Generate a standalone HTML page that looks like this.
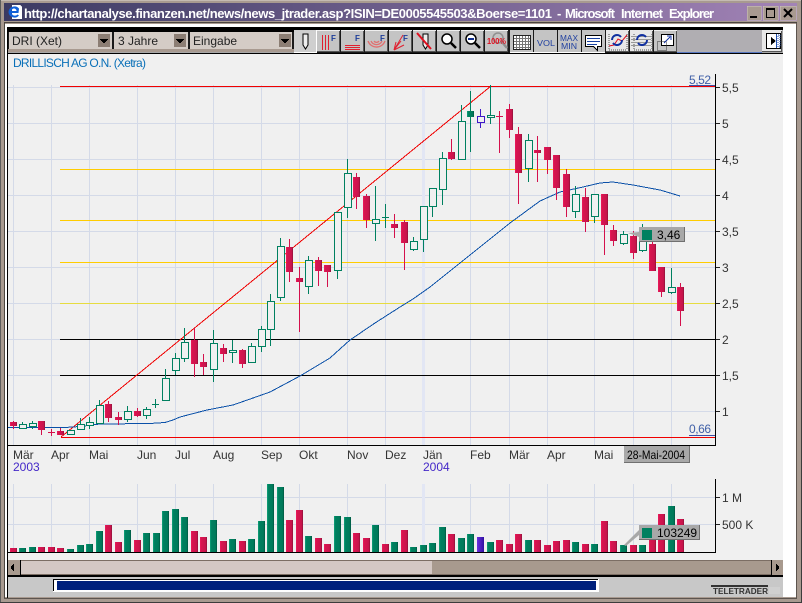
<!DOCTYPE html>
<html><head><meta charset="utf-8"><title>Chart</title>
<style>
html,body{margin:0;padding:0;background:#a89a90;width:802px;height:603px;overflow:hidden}
svg{display:block;font-family:"Liberation Sans",sans-serif}
.c{shape-rendering:crispEdges}
.t{font-size:12px;fill:#333}
</style></head><body>
<svg width="802" height="603" viewBox="0 0 802 603" xmlns="http://www.w3.org/2000/svg">
<defs>
<linearGradient id="tb"><stop offset="0" stop-color="#3b3a62"/><stop offset="1" stop-color="#a283b6"/></linearGradient>
<linearGradient id="r"><stop offset="0" stop-color="#ee1a60"/><stop offset=".18" stop-color="#d8154f"/><stop offset=".8" stop-color="#c8144c"/><stop offset="1" stop-color="#8c1038"/></linearGradient>
<linearGradient id="g"><stop offset="0" stop-color="#12a67c"/><stop offset=".2" stop-color="#008060"/><stop offset=".8" stop-color="#007a5a"/><stop offset="1" stop-color="#00553f"/></linearGradient>
<linearGradient id="v"><stop offset="0" stop-color="#6a30e0"/><stop offset="1" stop-color="#3010a0"/></linearGradient>
</defs>
<!-- frame -->
<g class="c">
<rect width="802" height="603" fill="#a89a90"/>
<rect width="802" height="1" fill="#c4bab2"/>
<rect width="1" height="603" fill="#5c5c5c"/>
<rect x="801" width="1" height="603" fill="#3c3c3c"/>
<rect y="602" width="802" height="1" fill="#3c3c3c"/>
<rect x="4" y="3" width="793" height="18" fill="url(#tb)"/>
<rect x="4" y="22" width="793" height="1" fill="#4c4640"/>
<rect x="4" y="23" width="1" height="576" fill="#4c4640"/>
<rect x="5" y="24" width="791" height="573" fill="#fff"/>
<rect x="796" y="23" width="1" height="576" fill="#5c544e"/>
<rect x="4" y="598" width="793" height="1" fill="#5c544e"/>
<rect x="7" y="27" width="776" height="3" fill="#000"/>
<rect x="7" y="27" width="1" height="571" fill="#000"/>
</g>
<!-- title -->
<path class="c" d="M12 5h8l2 2v12h-10z" fill="#fff"/>
<path d="M8.500 12a6 6 0 0 1 10.500-3.500l-.5 4.500h-7a3.500 3.500 0 0 0 6 1.500l1.500 1a6 6 0 0 1-10.500-3.500zM11.500 11h5a2.500 2.500 0 0 0-5 0z" fill="#1060d8" fill-rule="evenodd"/>
<g font-size="13" font-weight="bold" fill="#fff">
<text x="24" y="18" textLength="528" lengthAdjust="spacing">http://chartanalyse.finanzen.net/news/news_jtrader.asp?ISIN=DE0005545503&amp;Boerse=1101</text>
<text x="557" y="18">-</text>
<text x="565" y="18" textLength="50" lengthAdjust="spacing">Microsoft</text>
<text x="621" y="18" textLength="42" lengthAdjust="spacing">Internet</text>
<text x="669" y="18" textLength="45" lengthAdjust="spacing">Explorer</text>
</g>
<g class="c">
<path d="M747 6h14v14h-14zM763 6h15v14h-15zM780 6h16v14h-16z" fill="#a89a90" stroke="#d0c8c0" stroke-width=".5"/>
<path d="M750 16h7v2h-7zM766 8h9v2h-9z" fill="#000"/>
<path d="M766.500 9.500h8v8h-8z" fill="none" stroke="#000"/>
</g>
<path d="M784 9l8 8M792 9l-8 8" stroke="#000" stroke-width="2"/>
<!-- toolbar -->
<g class="c">
<rect x="8" y="29" width="775" height="24" fill="#a8a8a8"/>
<rect x="8" y="29" width="775" height="1" fill="#000"/>
<rect x="8" y="30" width="286" height="2" fill="#000"/>
<rect x="8" y="49" width="286" height="3" fill="#a89a90"/>
<rect x="316" y="30" width="361" height="23" fill="#1a1a1a"/>
<rect x="8" y="53" width="775" height="1" fill="#000"/>
<rect x="8" y="32" width="286" height="17" fill="#1a1a1a"/>
<rect x="9" y="32" width="103" height="17" fill="#d4ccc6"/>
<rect x="114" y="32" width="74" height="17" fill="#d4ccc6"/>
<rect x="190" y="32" width="102" height="17" fill="#d4ccc6"/>
<path d="M98 34h12v13h-12zM174 34h12v13h-12zM279 34h12v13h-12z" fill="#8c7e74"/>
<path d="M100 39h8v1h-1v1h-1v1h-1v1h-2v-1h-1v-1h-1v-1h-1zM176 39h8v1h-1v1h-1v1h-1v1h-2v-1h-1v-1h-1v-1h-1zM281 39h8v1h-1v1h-1v1h-1v1h-2v-1h-1v-1h-1v-1h-1z" fill="#000"/>
<rect x="294" y="30" width="23" height="22" fill="#cfcfcf"/>
<path d="M294 52h23v1h-23zM316 30h1v22h-1z" fill="#fff"/>
<rect x="677" y="30" width="85" height="22" fill="#b0aeb2"/>
<rect x="677" y="52" width="85" height="1" fill="#5878c0"/>
<path d="M317 30h23v22h-23zM341 30h23v22h-23zM365 30h23v22h-23zM389 30h23v22h-23zM413 30h23v22h-23zM437 30h23v22h-23zM461 30h23v22h-23zM485 30h23v22h-23zM510 30h23v22h-23zM534 30h23v22h-23zM558 30h23v22h-23zM582 30h23v22h-23zM654 30h23v22h-23z" fill="#c4c4c4"/>
<path d="M606 30h23v22h-23zM630 30h23v22h-23zM762 30h20v22h-20z" fill="#e8e8e8"/>
<path d="M317 30h23v1h-23zM341 30h23v1h-23zM365 30h23v1h-23zM389 30h23v1h-23zM413 30h23v1h-23zM437 30h23v1h-23zM461 30h23v1h-23zM485 30h23v1h-23zM654 30h23v1h-23z" fill="#efefef"/>
<path d="M339 31h1v21h-1zM363 31h1v21h-1zM387 31h1v21h-1zM411 31h1v21h-1zM435 31h1v21h-1zM459 31h1v21h-1zM483 31h1v21h-1zM507 31h1v21h-1zM628 31h1v21h-1zM652 31h1v21h-1zM676 31h1v21h-1zM781 31h1v21h-1zM317 51h23v1h-23zM341 51h23v1h-23zM365 51h23v1h-23zM389 51h23v1h-23zM413 51h23v1h-23zM437 51h23v1h-23zM461 51h23v1h-23zM485 51h23v1h-23zM606 51h23v1h-23zM630 51h23v1h-23zM654 51h23v1h-23zM762 51h20v1h-20z" fill="#555"/>
<path d="M510 52h95v1h-95z" fill="#fff"/>
</g>
<text x="12" y="45" font-size="12" fill="#222">DRI (Xet)</text>
<text x="118" y="45" font-size="12" fill="#222">3 Jahre</text>
<text x="193" y="45" font-size="12" fill="#222">Eingabe</text>
<!-- icons -->
<g fill="none">
<path d="M303 34h5v11l-2.500 4-2.500-4z" fill="#eee" stroke="#000"/>
<path d="M322.500 35v15M325.500 35v15M328.500 35v15M345 45.500h15M345 47.500h15M345 49.500h15" stroke="#e02030" class="c"/>
<path d="M368 41a9 9 0 0 0 17 0M371 41a6 6 0 0 0 11 0M374 41a3 3 0 0 0 5 0" stroke="#e07070" stroke-width="1.300"/>
<path d="M394 50l9-15M394 50l7-9M394 50l10-5M394 50l2-8" stroke="#e02030"/>
<path d="M423 34h5v11l-2.500 4-2.500-4z" fill="#eee" stroke="#000"/>
<path d="M417 33l14 16" stroke="#e01020" stroke-width="2"/>
<circle cx="447" cy="39" r="5" fill="#fff" stroke="#000" stroke-width="1.500"/>
<path d="M451 43l5 5" stroke="#000" stroke-width="2.500"/>
<circle cx="471" cy="39" r="5" fill="#fff" stroke="#000" stroke-width="1.500"/>
<path d="M475 43l5 5" stroke="#000" stroke-width="2.500"/>
<path d="M468 39h6" stroke="#103090" stroke-width="2"/>
<circle cx="498" cy="38" r="5" fill="#c4c4c4" stroke="#909090" stroke-width="1.500"/>
<path d="M502 42l5 6" stroke="#909090" stroke-width="2.500"/>
<g class="c">
<path d="M513.500 35.500h17v14h-17z" fill="#fff" stroke="#222"/>
<path d="M516.500 36v13M519.500 36v13M522.500 36v13M525.500 36v13M528.500 36v13M514 38.500h16M514 41.500h16M514 44.500h16M514 47.500h16" stroke="#777"/>
<path d="M585.500 35.500h16v11h-4v4l-4-4h-8z" fill="#fff" stroke="#000"/>
<path d="M587 38.500h13M587 41.500h13M587 44.500h10" stroke="#1840a0"/>
<path d="M609 34v16h18M634 34v16h18M627 34v16M652 34v16" stroke="#555" stroke-dasharray="1 1"/>
<path d="M631 36.500h20M631 39.500h20M631 42.500h20M631 45.500h20" stroke="#999"/>
<path d="M661.500 34.500h12v11h-12z" fill="#fff" stroke="#000"/>
<path d="M657.500 41.500h9v9h-9z" stroke="#333" stroke-dasharray="1 1"/>
<path d="M766.500 33.500h14v15h-14z" fill="#fff" stroke="#000"/>
<path d="M776.500 34v14" stroke="#2050b0"/>
<path d="M771 37l5 4-5 4z" fill="#000"/>
<path d="M778 35h2v12h-2z" stroke="#2050b0" stroke-dasharray="1 1"/>
</g>
<path d="M609 46l5-1 4-6 4 2 5-6" stroke="#e01020"/>
<path d="M612 40a5 5 0 0 1 9-3M622 40a5 5 0 0 1-9 3" stroke="#1030a0" stroke-width="2"/>
<path d="M637 40a5 5 0 0 1 9-3M647 40a5 5 0 0 1-9 3" stroke="#1030a0" stroke-width="2"/>
<path d="M664 43l6-6M667 36h4v4" stroke="#1030a0"/>
</g>
<g font-weight="bold" font-size="8" fill="#1c3c98">
<text x="331" y="41">F</text><text x="355" y="41">F</text><text x="380" y="41">F</text><text x="403" y="41">F</text>
</g>
<text x="487" y="44" font-size="8.500" font-weight="bold" fill="#e01020" textLength="19" lengthAdjust="spacingAndGlyphs">100%</text>
<g font-size="8.500" fill="#2040a0">
<text x="537" y="46" textLength="18" lengthAdjust="spacingAndGlyphs">VOL</text>
<text x="560" y="41" textLength="18" lengthAdjust="spacingAndGlyphs">MAX</text>
<text x="561" y="49" textLength="16" lengthAdjust="spacingAndGlyphs">MIN</text>
</g>
<!-- chart background -->
<rect class="c" x="8" y="54" width="775" height="506" fill="#f0f0f0"/>
<text x="13" y="67" font-size="12" fill="#0a70b8" textLength="133" lengthAdjust="spacing">DRILLISCH AG O.N. (Xetra)</text>
<!-- grid -->
<g class="c" stroke="#d4dae8" fill="none">
<path d="M8 87.500h707M8 123.500h707M8 159.500h707M8 195.500h707M8 231.500h707M8 267.500h707M8 303.500h707M8 339.500h707M8 375.500h707M8 411.500h707"/>
<path d="M13.500 85v360M51.500 85v360M89.500 85v360M137.500 85v360M175.500 85v360M213.500 85v360M261.500 85v360M299.500 85v360M347.500 85v360M385.500 85v360M470.500 85v360M509.500 85v360M547.500 85v360M594.500 85v360M633.500 85v360M671.500 85v360"/>
<path d="M423.500 85v360" stroke="#e2e6f4" stroke-width="3"/>
<path d="M8 497.500h707M8 524.500h707"/>
<path d="M13.500 484v68M51.500 484v68M89.500 484v68M137.500 484v68M175.500 484v68M213.500 484v68M261.500 484v68M299.500 484v68M347.500 484v68M385.500 484v68M470.500 484v68M509.500 484v68M547.500 484v68M594.500 484v68M633.500 484v68M671.500 484v68"/>
<path d="M423.500 484v68" stroke="#e2e6f4" stroke-width="3"/>
</g>
<!-- level lines -->
<g class="c" fill="none">
<path d="M60 86.500h655M61 437.500h654" stroke="#f00000"/>
<path d="M60 169.500h655M60 220.500h655M60 262.500h655" stroke="#ffcc00"/>
<path d="M60 303.500h655" stroke="#e6dc40"/>
<path d="M60 339.500h655M60 375.500h655" stroke="#000"/>
</g>
<path class="c" d="M61 437L491 86" stroke="#f00000" fill="none"/>
<path class="c" d="M8 427.500L65 427.500 80 426.500 100 424 150 423.500 165 422.500 173 420 180 417 207 410 233 405 253 398 270 392 300 376 330 358 350 340 375 323 400 307 413 299 430 287 450 271 470 255 490 239 510 223 540 201 560 192 583 187 600 183 613 182 633 185 660 190 680 196" stroke="#0a50a8" fill="none"/>
<!-- wicks -->
<g class="c" fill="none">
<path stroke="#008060" d="M22.500 422v7M32.500 421v8M70.500 430v5M80.500 418v12M89.500 417v12M99.500 400v24M127.500 406v16M146.500 407v12M155.500 399v9M152 404.500h7M165.500 369v32M175.500 353v22M184.500 328v34M213.500 330v52M232.500 340v23M251.500 343v20M261.500 326v26M270.500 294v52M280.500 238v63M308.500 256v38M337.500 212v67M347.500 159v59M375.500 186v55M385.500 204v24M382 217.500h7M413.500 237v14M423.500 206v46M432.500 188v29M442.500 152v53M461.500 105v55M470.500 91v61M490.500 85v39M528.500 134v48M575.500 186v32M594.500 194v29M623.500 231v14M642.500 224v28M671.500 268v26"/>
<path stroke="#d4104c" d="M13.500 421v8M41.500 421v14M51.500 429v7M48 432.500h7M60.500 428v7M108.500 401v21M118.500 412v13M137.500 408v9M194.500 328v49M203.500 354v21M223.500 344v18M242.500 349v19M289.500 239v43M299.500 267v65M318.500 257v29M327.500 265v22M356.500 173v36M366.500 194v34M394.500 214v24M404.500 220v50M451.500 139v21M499.500 111v42M496 116.500h7M509.500 104v34M518.500 127v77M537.500 136v46M547.500 147v27M556.500 155v45M566.500 169v48M585.500 188v44M604.500 194v61M613.500 225v21M633.500 231v28M652.500 240v31M661.500 267v30M680.500 283v43"/>
<path stroke="#4018c8" d="M480.500 109v19"/>
</g>
<!-- hollow bodies -->
<g class="c" fill="#f0f0f0" stroke="#008060">
<path d="M19.500 424.500h7v4h-7zM29.500 423.500h7v3h-7zM67.500 430.500h7v4h-7zM77.500 424.500h7v5h-7zM86.500 422.500h7v3h-7zM96.500 405.500h7v18h-7zM124.500 411.500h7v8h-7zM143.500 409.500h7v6h-7zM162.500 378.500h7v22h-7zM172.500 358.500h7v12h-7zM181.500 342.500h7v16h-7zM210.500 343.500h7v26h-7zM229.500 350.500h7v2h-7zM248.500 346.500h7v16h-7zM258.500 329.500h7v17h-7zM267.500 301.500h7v28h-7zM277.500 246.500h7v51h-7zM305.500 260.500h7v26h-7zM334.500 212.500h7v58h-7zM344.500 173.500h7v34h-7zM372.500 219.500h7v4h-7zM410.500 241.500h7v8h-7zM420.500 206.500h7v33h-7zM429.500 188.500h7v18h-7zM439.500 158.500h7v31h-7zM458.500 121.500h7v38h-7zM487.500 115.500h7v2h-7zM525.500 140.500h7v28h-7zM572.500 194.500h7v17h-7zM591.500 194.500h7v22h-7zM620.500 234.500h7v9h-7zM639.500 237.500h7v13h-7zM668.500 287.500h7v5h-7z"/>
<path d="M477.500 116.500h7v6h-7z" stroke="#4018c8"/>
<path d="M467 111h7v6h-7z" fill="url(#g)" stroke="none"/>
</g>
<!-- red bodies -->
<g class="c" fill="url(#r)">
<rect x="10" y="422" width="7" height="4"/><rect x="38" y="421" width="7" height="9"/><rect x="57" y="431" width="7" height="4"/><rect x="105" y="404" width="7" height="14"/><rect x="115" y="417" width="7" height="3"/><rect x="134" y="411" width="7" height="5"/><rect x="191" y="340" width="7" height="24"/><rect x="200" y="362" width="7" height="5"/><rect x="220" y="348" width="7" height="6"/><rect x="239" y="350" width="7" height="14"/><rect x="286" y="247" width="7" height="25"/><rect x="296" y="278" width="7" height="4"/><rect x="315" y="260" width="7" height="11"/><rect x="324" y="265" width="7" height="7"/><rect x="353" y="177" width="7" height="20"/><rect x="363" y="196" width="7" height="24"/><rect x="391" y="224" width="7" height="4"/><rect x="401" y="222" width="7" height="21"/><rect x="448" y="152" width="7" height="7"/><rect x="506" y="109" width="7" height="21"/><rect x="515" y="134" width="7" height="39"/><rect x="534" y="150" width="7" height="3"/><rect x="544" y="147" width="7" height="13"/><rect x="553" y="155" width="7" height="33"/><rect x="563" y="174" width="7" height="33"/><rect x="582" y="197" width="7" height="25"/><rect x="601" y="194" width="7" height="31"/><rect x="610" y="230" width="7" height="11"/><rect x="630" y="236" width="7" height="17"/><rect x="649" y="244" width="7" height="27"/><rect x="658" y="267" width="7" height="25"/><rect x="677" y="287" width="7" height="24"/>
</g>
<!-- volume bars -->
<g class="c" fill="url(#r)">
<rect x="10" y="548" width="7" height="4"/><rect x="38" y="547" width="7" height="5"/><rect x="48" y="547" width="7" height="5"/><rect x="57" y="548" width="7" height="4"/><rect x="105" y="525" width="7" height="27"/><rect x="115" y="542" width="7" height="10"/><rect x="134" y="540" width="7" height="12"/><rect x="191" y="531" width="7" height="21"/><rect x="200" y="537" width="7" height="15"/><rect x="220" y="541" width="7" height="11"/><rect x="239" y="541" width="7" height="11"/><rect x="286" y="520" width="7" height="32"/><rect x="296" y="510" width="7" height="42"/><rect x="315" y="538" width="7" height="14"/><rect x="324" y="544" width="7" height="8"/><rect x="353" y="533" width="7" height="19"/><rect x="363" y="538" width="7" height="14"/><rect x="382" y="544" width="7" height="8"/><rect x="401" y="530" width="7" height="22"/><rect x="448" y="534" width="7" height="18"/><rect x="496" y="540" width="7" height="12"/><rect x="506" y="544" width="7" height="8"/><rect x="515" y="534" width="7" height="18"/><rect x="534" y="540" width="7" height="12"/><rect x="544" y="545" width="7" height="7"/><rect x="553" y="541" width="7" height="11"/><rect x="563" y="540" width="7" height="12"/><rect x="582" y="544" width="7" height="8"/><rect x="601" y="521" width="7" height="31"/><rect x="610" y="541" width="7" height="11"/><rect x="630" y="545" width="7" height="7"/><rect x="649" y="539" width="7" height="13"/><rect x="658" y="514" width="7" height="38"/><rect x="677" y="519" width="7" height="33"/>
</g>
<g class="c" fill="url(#g)">
<rect x="19" y="548" width="7" height="4"/><rect x="29" y="547" width="7" height="5"/><rect x="67" y="549" width="7" height="3"/><rect x="77" y="545" width="7" height="7"/><rect x="86" y="544" width="7" height="8"/><rect x="96" y="531" width="7" height="21"/><rect x="124" y="530" width="7" height="22"/><rect x="143" y="533" width="7" height="19"/><rect x="153" y="533" width="7" height="19"/><rect x="162" y="511" width="7" height="41"/><rect x="172" y="509" width="7" height="43"/><rect x="181" y="517" width="7" height="35"/><rect x="210" y="520" width="7" height="32"/><rect x="229" y="539" width="7" height="13"/><rect x="248" y="539" width="7" height="13"/><rect x="258" y="521" width="7" height="31"/><rect x="267" y="484" width="7" height="68"/><rect x="277" y="487" width="7" height="65"/><rect x="305" y="536" width="7" height="16"/><rect x="334" y="516" width="7" height="36"/><rect x="344" y="517" width="7" height="35"/><rect x="372" y="525" width="7" height="27"/><rect x="391" y="542" width="7" height="10"/><rect x="410" y="547" width="7" height="5"/><rect x="420" y="545" width="7" height="7"/><rect x="429" y="543" width="7" height="9"/><rect x="439" y="527" width="7" height="25"/><rect x="458" y="538" width="7" height="14"/><rect x="467" y="534" width="7" height="18"/><rect x="487" y="542" width="7" height="10"/><rect x="525" y="540" width="7" height="12"/><rect x="572" y="542" width="7" height="10"/><rect x="591" y="544" width="7" height="8"/><rect x="620" y="545" width="7" height="7"/><rect x="639" y="545" width="7" height="7"/><rect x="668" y="506" width="7" height="46"/>
</g>
<rect class="c" x="477" y="537" width="7" height="15" fill="url(#v)"/>
<!-- axes -->
<g class="c" fill="none" stroke="#000">
<path d="M8 445.500h708M715.500 74v372M8 552.500h708M715.500 479v74"/>
<path stroke="#222" d="M716 87.500h4M716 123.500h4M716 159.500h4M716 195.500h4M716 231.500h4M716 267.500h4M716 303.500h4M716 339.500h4M716 375.500h4M716 411.500h4M716 497.500h4M716 524.500h4"/>
<path stroke="#3c50a8" d="M689 85.500h26M689 435.500h26"/>
</g>
<text x="689" y="84" font-size="12" fill="#4060a8" textLength="22">5,52</text>
<text x="689" y="433" font-size="12" fill="#4060a8" textLength="22">0,66</text>
<g class="t">
<text x="722" y="92">5,5</text><text x="722" y="128">5</text><text x="722" y="164">4,5</text><text x="722" y="200">4</text><text x="722" y="236">3,5</text><text x="722" y="272">3</text><text x="722" y="308">2,5</text><text x="722" y="344">2</text><text x="722" y="380">1,5</text><text x="722" y="416">1</text>
<text x="722" y="502">1 M</text><text x="722" y="529">500 K</text>
<text x="13" y="459">Mär</text><text x="51" y="459">Apr</text><text x="89" y="459">Mai</text><text x="137" y="459">Jun</text><text x="175" y="459">Jul</text><text x="213" y="459">Aug</text><text x="261" y="459">Sep</text><text x="299" y="459">Okt</text><text x="347" y="459">Nov</text><text x="385" y="459">Dez</text><text x="423" y="459">Jän</text><text x="470" y="459">Feb</text><text x="509" y="459">Mär</text><text x="547" y="459">Apr</text><text x="594" y="459">Mai</text>
</g>
<text x="13" y="471" font-size="12" fill="#4428c8">2003</text>
<text x="423" y="471" font-size="12" fill="#4428c8">2004</text>
<!-- tags -->
<g class="c">
<rect x="624" y="446" width="66" height="17" fill="#a8a8a8"/>
<path d="M624 462h66v1h-66zM689 446h1v17h-1z" fill="#707070"/>
<rect x="639" y="227" width="46" height="15" fill="#a8a8a8"/>
<path d="M639 241h46v1h-46zM684 227h1v15h-1z" fill="#707070"/>
<rect x="642" y="230" width="10" height="10" fill="#008060"/>
<rect x="639" y="525" width="61" height="15" fill="#a8a8a8"/>
<path d="M639 539h61v1h-61zM699 525h1v15h-1z" fill="#707070"/>
<rect x="642" y="528" width="10" height="10" fill="#008060"/>
</g>
<path d="M628 233l11-1v5z" fill="#a8a8a8"/>
<path d="M624 545l15-15v5l-13 11z" fill="#a8a8a8"/>
<text x="627" y="459" font-size="12" fill="#000" textLength="58" lengthAdjust="spacingAndGlyphs">28-Mai-2004</text>
<text x="657" y="239" font-size="12" fill="#000">3,46</text>
<text x="657" y="537" font-size="12" fill="#000">103249</text>
<!-- scrollbar & status -->
<g class="c">
<rect x="8" y="560" width="775" height="15" fill="#a89a8e"/>
<rect x="20" y="561" width="412" height="13" fill="#d4c8c4"/>
<path d="M8 560h775v1h-775zM8 574h775v1h-775z" fill="#7c6e64"/>
<rect x="8" y="560" width="12" height="15" fill="#a89a8e"/>
<rect x="20" y="560" width="1" height="15" fill="#000"/>
<rect x="771" y="560" width="12" height="15" fill="#a89a8e"/>
<rect x="771" y="560" width="1" height="15" fill="#000"/>
<path d="M13 564h1v7h-1zM12 565h1v5h-1zM11 566h1v3h-1zM776 564h1v7h-1zM777 565h1v5h-1zM778 566h1v3h-1z" fill="#000"/>
<rect x="8" y="575" width="775" height="2" fill="#000"/>
<rect x="8" y="577" width="775" height="20" fill="#c8c8c8"/>
<rect x="53" y="579" width="546" height="13" fill="#fff"/>
<path d="M53 579h545v1h-545zM53 579h1v12h-1z" fill="#000"/>
<rect x="57" y="581" width="539" height="9" fill="#00207c"/>
<rect x="769" y="587" width="11" height="7" fill="#d0d0d0"/>
<rect x="711" y="585" width="57" height="2" fill="#333"/>
</g>
<text x="713" y="594" font-size="8" font-weight="bold" fill="#333" textLength="55" lengthAdjust="spacingAndGlyphs">TELETRADER</text>
</svg>
</body></html>
